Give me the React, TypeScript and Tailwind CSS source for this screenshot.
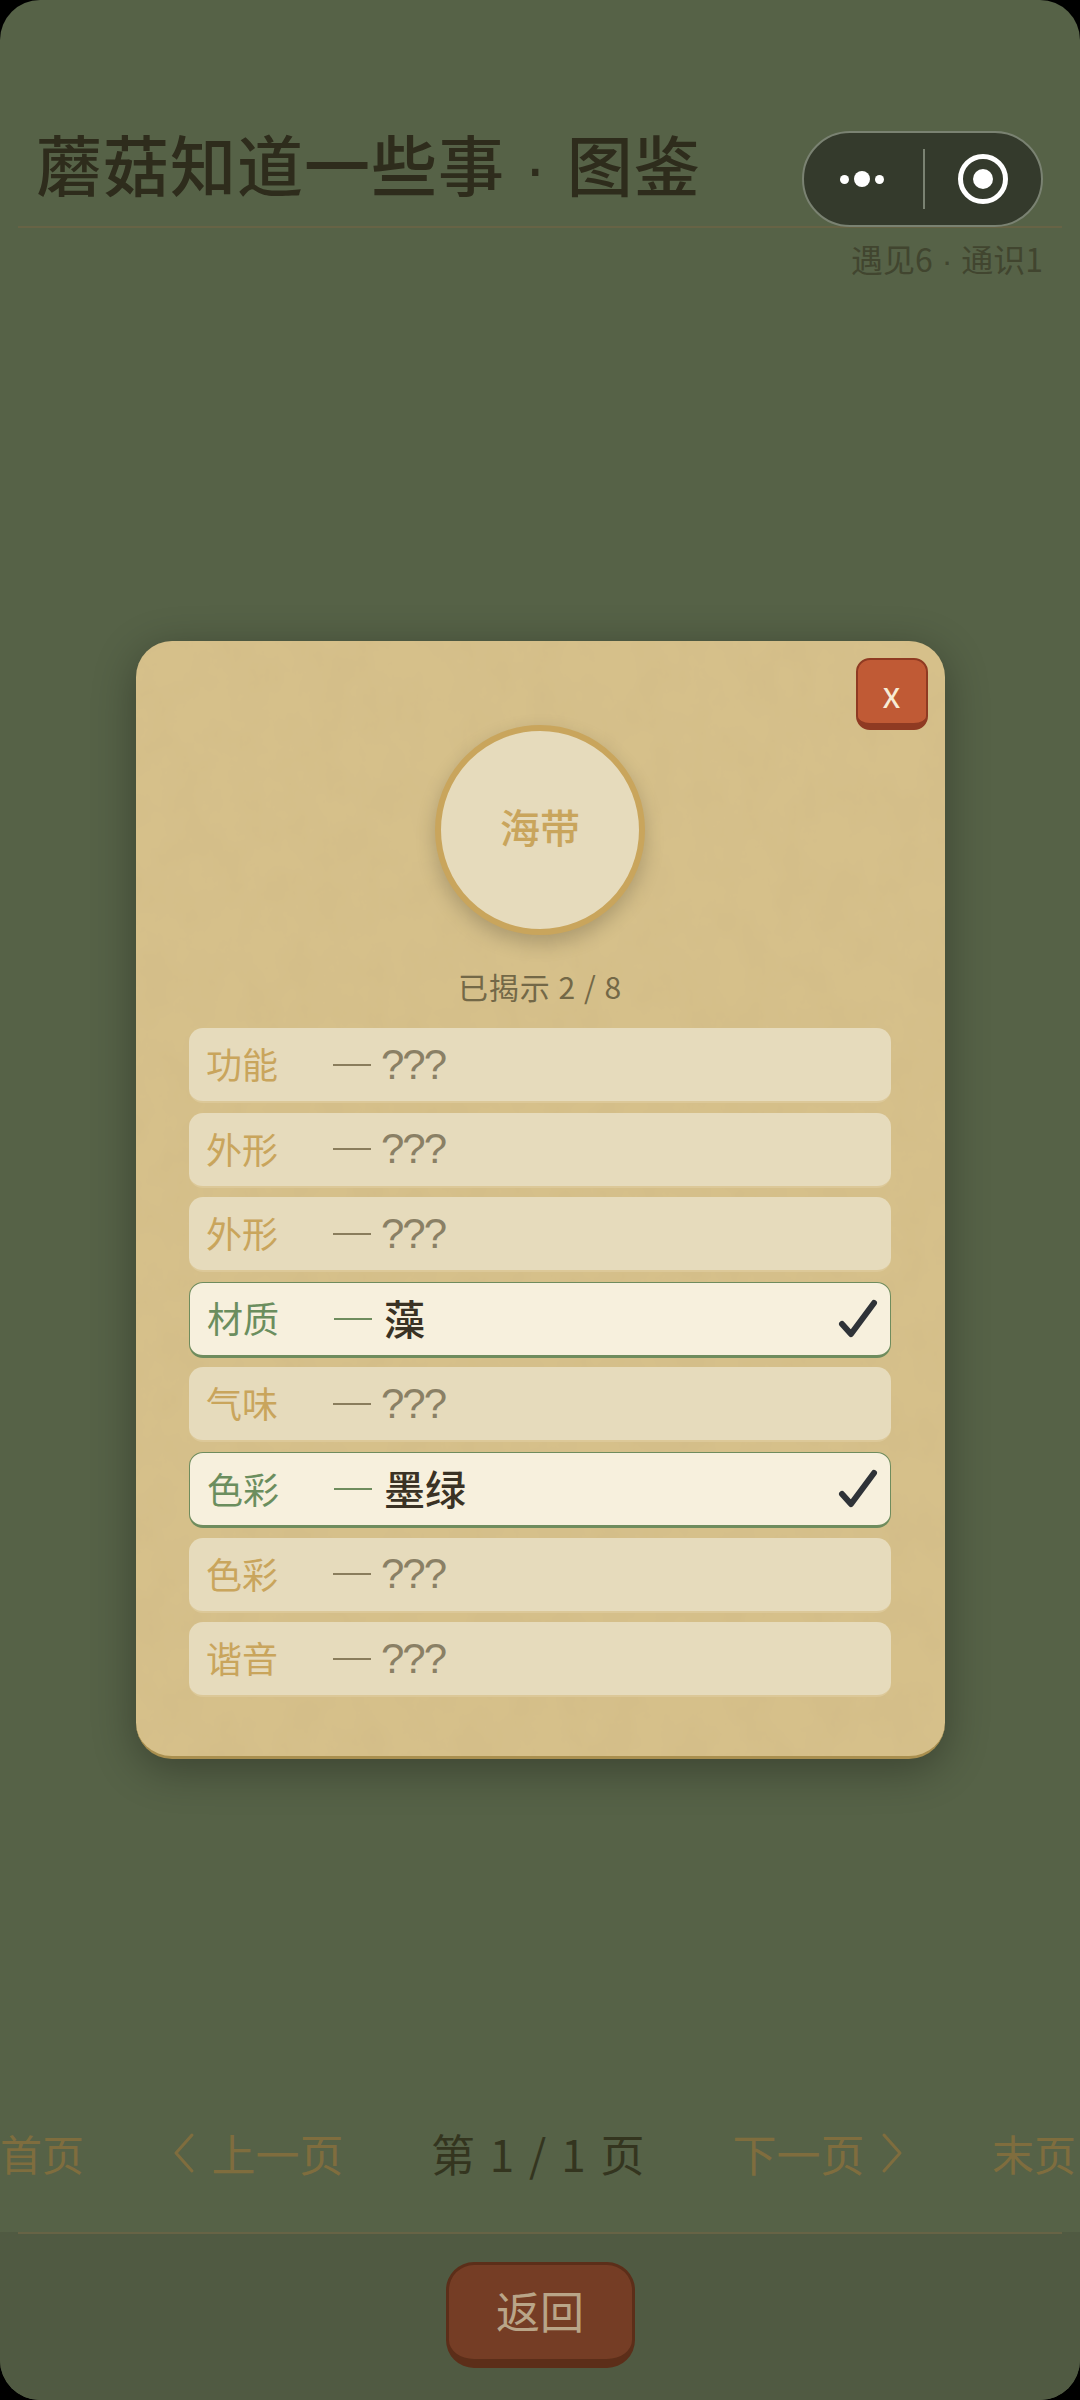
const locked = "h-[75px] bg-[#e6dbbc] border-b-2 border-[#dcc898]";
const revealed = "h-[76.4px] bg-[#f7f0dd] border-[1.5px] border-b-[3px] border-[#6f8c5d]";

const rows = [
  { label: "功能" },
  { label: "外形" },
  { label: "外形" },
  { label: "材质", value: "藻" },
  { label: "气味" },
  { label: "色彩", value: "墨绿" },
  { label: "色彩" },
  { label: "谐音" },
];

function Paper() {
  return (
    <svg className="absolute inset-0 w-full h-full rounded-[36px]" aria-hidden="true">
      <filter id="paper">
        <feTurbulence type="fractalNoise" baseFrequency="0.028 0.022" numOctaves="6" seed="23" />
        <feColorMatrix values="0 0 0 0 0.62  0 0 0 0 0.48  0 0 0 0 0.24  0 0 0 0.6 -0.19" />
      </filter>
      <rect width="100%" height="100%" rx="36" filter="url(#paper)" />
    </svg>
  );
}

function Row({ label, value }: { label: string; value?: string }) {
  return (
    <div className={`flex items-center rounded-[14px] pl-[17px] pr-[12px] ${value ? revealed : locked}`}>
      <span className={`w-[127px] shrink-0 -mt-[3px] text-[36px] leading-none ${value ? "text-[#6b8e5e]" : "text-[#c9a55c]"}`}>{label}</span>
      <span className={`h-[2px] w-[38px] shrink-0 ${value ? "bg-[#6f8c5d]" : "bg-[#8a7d5c]"}`} />
      {value ? (
        <span className="ml-[12px] -mt-[3px] text-[41px] leading-none font-medium text-[#3a3224]">{value}</span>
      ) : (
        <span className="ml-[10px] font-['Liberation_Sans',sans-serif] text-[42px] leading-none tracking-[-2px] text-[#8a8065]">???</span>
      )}
      {value && (
        <svg className="ml-auto" width="40" height="40" viewBox="0 0 40 40" fill="none">
          <path d="M4 25 L13 35 L36 4" stroke="#2f3338" strokeWidth="6" strokeLinecap="round" strokeLinejoin="round" />
        </svg>
      )}
    </div>
  );
}

function Chevron({ right }: { right?: boolean }) {
  return (
    <svg width="24" height="42" viewBox="0 0 24 42" fill="none">
      <path d={right ? "M4 3 L20 21 L4 39" : "M20 3 L4 21 L20 39"} stroke="#7f6d3e" strokeWidth="3" strokeLinecap="round" strokeLinejoin="round" />
    </svg>
  );
}

function Dot() {
  return <span className="font-['Liberation_Sans',sans-serif]"> · </span>;
}

export default function App() {
  return (
    <div className="w-[1080px] h-[2400px] bg-black overflow-hidden font-['Noto_Sans_CJK_SC',sans-serif]">
      <div className="relative flex flex-col w-full h-full rounded-[40px] overflow-hidden bg-[#566247]">
        <header className="mx-[18px] pl-[18px] pt-[123px] h-[228px] border-b-2 border-[#676345]">
          <h1 className="h-[78px] text-[66px] leading-[78px] tracking-[1px] font-medium text-[#2e2c1c] whitespace-nowrap">蘑菇知道一些事<Dot />图鉴</h1>
        </header>
        <p className="self-end mr-[37px] mt-[8px] h-[44px] text-[32px] leading-[44px] text-[#41452f]">遇见6<Dot />通识1</p>

        <div className="flex-1" />

        <nav className="flex items-center justify-between h-[120px] mb-[19px] text-[42px] leading-none text-[#7f6d3e] whitespace-nowrap">
          <span>首页</span>
          <span className="flex items-center gap-[16px] text-[44px]"><Chevron />上一页</span>
          <span className="text-[44px] [word-spacing:4px] tracking-[0.5px] text-[#34351f]">第 1 / 1 页</span>
          <span className="flex items-center gap-[16px] text-[44px]">下一页<Chevron right /></span>
          <span className="pr-[4px]">末页</span>
        </nav>

        <footer className="flex justify-center h-[168px] pt-[30px] bg-[#505a42]">
          <div className="relative w-full flex justify-center">
            <div className="absolute top-[-30px] left-[18px] right-[18px] h-[2px] bg-[#676345]" />
            <button className="flex items-center justify-center w-[189px] h-[106px] rounded-[28px] bg-[#753d25] border-[3px] border-b-[9px] border-[#5c2e19] text-[44px] leading-none text-[#b9a588]"><span className="-mt-[5px]">返回</span></button>
          </div>
        </footer>

        {/* system capsule */}
        <div className="absolute top-[131px] left-[802px] flex items-center w-[241px] h-[96px] rounded-[48px] bg-[#343a2c] border-2 border-[#7a8272]">
          <div className="flex items-center justify-center gap-[5px] w-[119px] pr-[3px]">
            <span className="w-[9px] h-[9px] rounded-full bg-white" />
            <span className="w-[16px] h-[16px] rounded-full bg-white" />
            <span className="w-[9px] h-[9px] rounded-full bg-white" />
          </div>
          <span className="w-[2px] h-[60px] bg-[#7a8272]" />
          <div className="flex items-center justify-center flex-1">
            <span className="flex items-center justify-center w-[50px] h-[50px] rounded-full border-[5px] border-white">
              <span className="w-[20px] h-[20px] rounded-full bg-white" />
            </span>
          </div>
        </div>

        {/* modal */}
        <div className="absolute inset-0 flex items-center justify-center">
          <div className="relative w-[809px] h-[1118px] rounded-[36px] bg-[#d6c08a] border-b-[3px] border-[#a98f4f] shadow-[0_10px_44px_rgba(0,0,0,0.32)] flex flex-col items-center pt-[84px]">
            <Paper />
            <button className="absolute top-[17px] right-[17px] flex items-center justify-center w-[72px] h-[72px] rounded-[14px] bg-[#c05a35] border-[2px] border-b-[7px] border-[#8f3a22] text-[36px] leading-none text-[#f7ecd5]">x</button>
            <div className="relative flex items-center justify-center w-[210px] h-[210px] rounded-full bg-[#e6dbbc] border-[6px] border-[#c9a55c] shadow-[0_8px_20px_rgba(0,0,0,0.2)] text-[40px] leading-none font-medium text-[#c9a55c]"><span className="-mt-[8px]">海带</span></div>
            <p className="relative mt-[31px] mb-[2px] text-[30px] leading-[40px] tracking-[1px] text-[#736847]">已揭示 2 / 8</p>
            <div className="relative mt-[20px] flex flex-col gap-[9.5px] w-[702px]">
              {rows.map((r, i) => (
                <Row key={i} label={r.label} value={r.value} />
              ))}
            </div>
          </div>
        </div>
      </div>
    </div>
  );
}
